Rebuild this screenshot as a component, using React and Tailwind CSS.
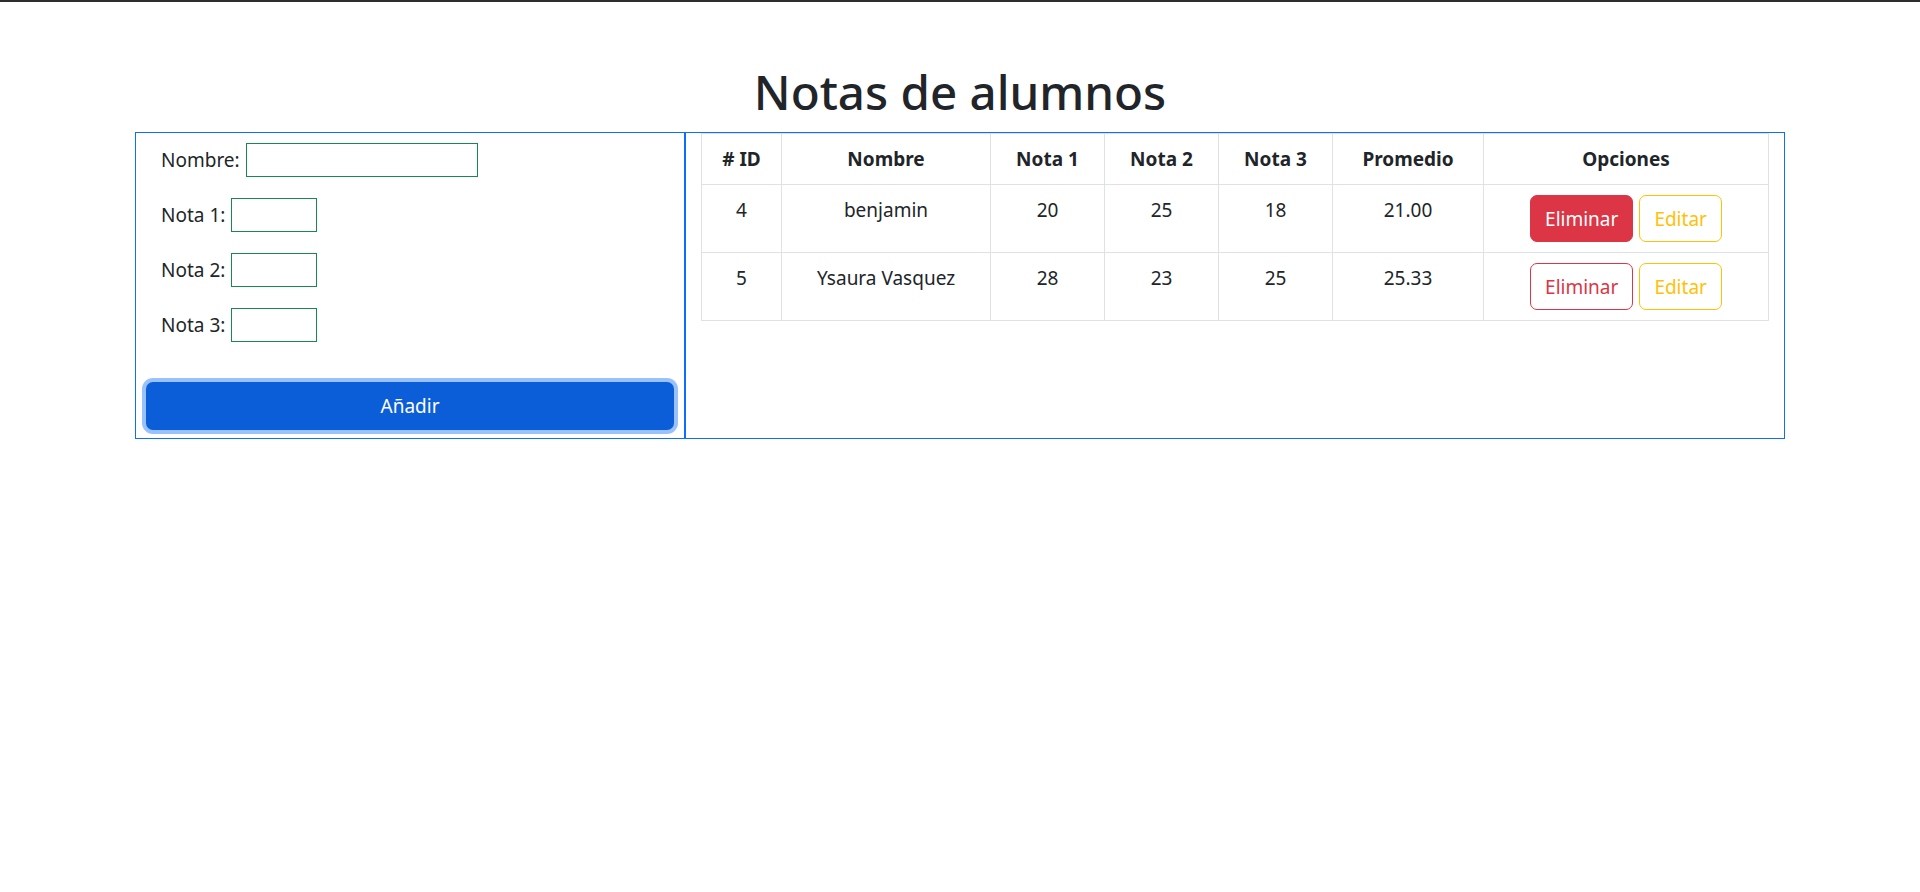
import React from 'react';

// datos de ejemplo de la tabla
const alumnos = [
  { id: 4, nombre: 'benjamin', n1: 20, n2: 25, n3: 18, activo: true },
  { id: 5, nombre: 'Ysaura Vasquez', n1: 28, n2: 23, n3: 25, activo: false },
];

function Campo({ label, ancho }) {
  return (
    <div className="flex items-center h-[34px] pl-[16px]">
      <label className="mr-[6px]">{label}</label>
      <input type="text" className={`h-[34px] ${ancho} border border-[#198754] bg-white outline-none`} />
    </div>
  );
}

export default function App() {
  return (
    <div className="min-h-screen bg-white text-[#212529] text-[19px] leading-[30px]" style={{ fontFamily: '"Segoe UI", "Noto Sans", sans-serif' }}>
      <div className="h-[2px] bg-[#2e2e2e]" />
      <h1 className="mt-[60px] mb-[10px] text-center text-[47.5px] leading-[60px] font-medium">Notas de alumnos</h1>

      <div className="mx-auto w-[1650px] flex">
        {/* formulario */}
        <div className="w-[550px] border border-[#0d6efd] pt-[10px] px-[9px] pb-[8px] flex flex-col">
          <div className="flex flex-col gap-[21px]">
            <Campo label="Nombre:" ancho="w-[232px]" />
            <Campo label="Nota 1:" ancho="w-[86px]" />
            <Campo label="Nota 2:" ancho="w-[86px]" />
            <Campo label="Nota 3:" ancho="w-[86px]" />
          </div>
          <button className="mt-[40px] h-[48px] mx-[1px] rounded-[7px] bg-[#0b5ed7] text-white ring-4 ring-[#98c1fe]">
            Añadir
          </button>
        </div>

        {/* tabla */}
        <div className="w-[1100px] border border-[#0d6efd] px-[15px]">
          <table className="w-[1067px] table-fixed border-collapse border border-[#dee2e6] text-center">
            <colgroup>
              <col className="w-[80px]" />
              <col className="w-[209px]" />
              <col className="w-[114px]" />
              <col className="w-[114px]" />
              <col className="w-[114px]" />
              <col className="w-[151px]" />
              <col className="w-[285px]" />
            </colgroup>
            <thead>
              <tr>
                {['# ID', 'Nombre', 'Nota 1', 'Nota 2', 'Nota 3', 'Promedio', 'Opciones'].map(h => (
                  <th key={h} className="border border-[#dee2e6] p-[10px] font-bold align-top">{h}</th>
                ))}
              </tr>
            </thead>
            <tbody>
              {alumnos.map(a => (
                <tr key={a.id}>
                  <td className="border border-[#dee2e6] p-[10px] align-top">{a.id}</td>
                  <td className="border border-[#dee2e6] p-[10px] align-top">{a.nombre}</td>
                  <td className="border border-[#dee2e6] p-[10px] align-top">{a.n1}</td>
                  <td className="border border-[#dee2e6] p-[10px] align-top">{a.n2}</td>
                  <td className="border border-[#dee2e6] p-[10px] align-top">{a.n3}</td>
                  <td className="border border-[#dee2e6] p-[10px] align-top">{((a.n1 + a.n2 + a.n3) / 3).toFixed(2)}</td>
                  <td className="border border-[#dee2e6] p-[10px] align-top">
                    <div className="flex justify-center gap-[6px]">
                      <button
                        className={`h-[47px] px-[14px] rounded-[7px] border ${
                          a.activo
                            ? 'bg-[#dc3545] border-[#dc3545] text-white'
                            : 'bg-white border-[#dc3545] text-[#dc3545]'
                        }`}
                      >
                        Eliminar
                      </button>
                      <button className="h-[47px] px-[14px] rounded-[7px] border border-[#ffc107] text-[#ffc107] bg-white">
                        Editar
                      </button>
                    </div>
                  </td>
                </tr>
              ))}
            </tbody>
          </table>
        </div>
      </div>
    </div>
  );
}
